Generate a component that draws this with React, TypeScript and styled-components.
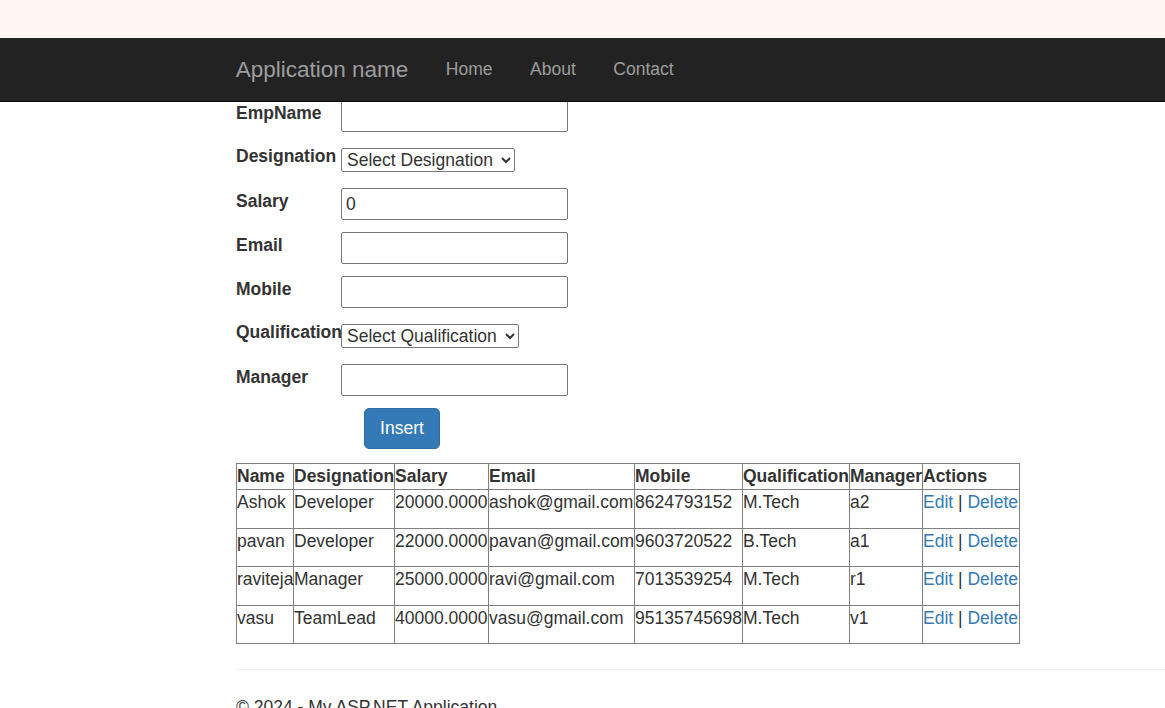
import React from "react";
import styled, { createGlobalStyle } from "styled-components";

const Global = createGlobalStyle`
  html { overflow: hidden; }
  body {
    margin: 0;
    background: #fff;
    font-family: "Liberation Sans", Arial, Helvetica, sans-serif;
    font-size: 17.5px;
    line-height: 1.42857;
    color: #333;
  }
  * { box-sizing: border-box; }
`;

const TopStrip = styled.div`
  height: 38px;
  background: #fff5f3;
`;

const Navbar = styled.nav`
  position: relative;
  z-index: 2;
  background: #222;
  border-bottom: 1px solid #080808;
  height: 63.5px;
  display: flex;
  align-items: center;
  padding-left: 217px;
`;

const Brand = styled.a`
  font-size: 22.5px;
  line-height: 25px;
  color: #9d9d9d;
  padding: 0 18.75px;
  text-decoration: none;
`;

const NavLink = styled.a`
  font-size: 17.5px;
  line-height: 25px;
  color: #9d9d9d;
  padding: 0 18.75px;
  text-decoration: none;
`;

const Main = styled.main`
  margin-top: -1.5px;
  padding-left: 236px;
`;

const Form = styled.div`
  display: grid;
  grid-template-columns: 105px max-content;
  grid-auto-rows: 44px;
  align-items: start;
`;

const Label = styled.label<{ $sel?: boolean }>`
  font-weight: bold;
  line-height: 25px;
  padding-top: ${(p) => (p.$sel ? "0" : "0.5px")};
  white-space: nowrap;
`;

const TextInput = styled.input`
  width: 227px;
  height: 32px;
  border: 1px solid #767676;
  border-radius: 2px;
  font-family: inherit;
  font-size: 17.5px;
  color: #333;
  padding: 0 4px;
  background: #fff;
`;

const Select = styled.select`
  height: 24px;
  margin-top: 4px;
  border: 1px solid #767676;
  border-radius: 2px;
  font-family: inherit;
  font-size: 17.5px;
  color: #333;
  background: #fff;
  padding: 0 5px 0 1px;
`;

const ButtonCell = styled.div`
  grid-column: 2;
  padding-left: 23px;
`;

const InsertButton = styled.button`
  width: 76px;
  height: 41px;
  background: #337ab7;
  border: 1px solid #2e6da4;
  border-radius: 5px;
  color: #fff;
  font-family: inherit;
  font-size: 17.5px;
  cursor: pointer;
`;

const Table = styled.table`
  margin-top: 11px;
  width: 783px;
  border-collapse: collapse;
  table-layout: fixed;
`;

const Col = styled.col<{ $w: number }>`
  width: ${(p) => p.$w}px;
`;

const Th = styled.th`
  border: 1px solid #808080;
  padding: 0;
  text-align: left;
  vertical-align: top;
  font-weight: bold;
  height: 26px;
  line-height: 25px;
  white-space: nowrap;
  overflow: visible;
`;

const Td = styled.td`
  border: 1px solid #808080;
  padding: 0;
  vertical-align: top;
  height: 38.5px;
  line-height: 25px;
  white-space: nowrap;
  overflow: visible;
`;

const Link = styled.a`
  color: #337ab7;
  text-decoration: none;
`;

const Rule = styled.hr`
  margin: 25px 0 25px;
  border: 0;
  border-top: 1px solid #eee;
`;

const FooterText = styled.p`
  margin: 0 0 12.5px;
`;

const cols: [string, number][] = [
  ["Name", 57],
  ["Designation", 101],
  ["Salary", 94],
  ["Email", 146],
  ["Mobile", 108],
  ["Qualification", 107],
  ["Manager", 73],
  ["Actions", 97],
];

const rows = [
  ["Ashok", "Developer", "20000.0000", "ashok@gmail.com", "8624793152", "M.Tech", "a2"],
  ["pavan", "Developer", "22000.0000", "pavan@gmail.com", "9603720522", "B.Tech", "a1"],
  ["raviteja", "Manager", "25000.0000", "ravi@gmail.com", "7013539254", "M.Tech", "r1"],
  ["vasu", "TeamLead", "40000.0000", "vasu@gmail.com", "95135745698", "M.Tech", "v1"],
];

export default function App() {
  return (
    <>
      <Global />
      <TopStrip />
      <Navbar>
        <Brand href="#">Application name</Brand>
        <NavLink href="#">Home</NavLink>
        <NavLink href="#">About</NavLink>
        <NavLink href="#">Contact</NavLink>
      </Navbar>
      <Main>
        <Form>
          <Label>EmpName</Label>
          <TextInput />
          <Label $sel>Designation</Label>
          <div>
            <Select defaultValue="">
              <option value="">Select Designation</option>
              <option>Developer</option>
              <option>Manager</option>
              <option>TeamLead</option>
            </Select>
          </div>
          <Label>Salary</Label>
          <TextInput defaultValue="0" />
          <Label>Email</Label>
          <TextInput />
          <Label>Mobile</Label>
          <TextInput />
          <Label $sel>Qualification</Label>
          <div>
            <Select defaultValue="">
              <option value="">Select Qualification</option>
              <option>M.Tech</option>
              <option>B.Tech</option>
            </Select>
          </div>
          <Label>Manager</Label>
          <TextInput />
          <ButtonCell>
            <InsertButton>Insert</InsertButton>
          </ButtonCell>
        </Form>
        <Table>
          <colgroup>
            {cols.map(([c, w]) => (
              <Col key={c} $w={w} />
            ))}
          </colgroup>
          <thead>
            <tr>
              {cols.map(([c]) => (
                <Th key={c}>{c}</Th>
              ))}
            </tr>
          </thead>
          <tbody>
            {rows.map((r) => (
              <tr key={r[0]}>
                {r.map((v, i) => (
                  <Td key={i}>{v}</Td>
                ))}
                <Td>
                  <Link href="#">Edit</Link> | <Link href="#">Delete</Link>
                </Td>
              </tr>
            ))}
          </tbody>
        </Table>
        <Rule />
        <FooterText>© 2024 - My ASP.NET Application</FooterText>
      </Main>
    </>
  );
}
